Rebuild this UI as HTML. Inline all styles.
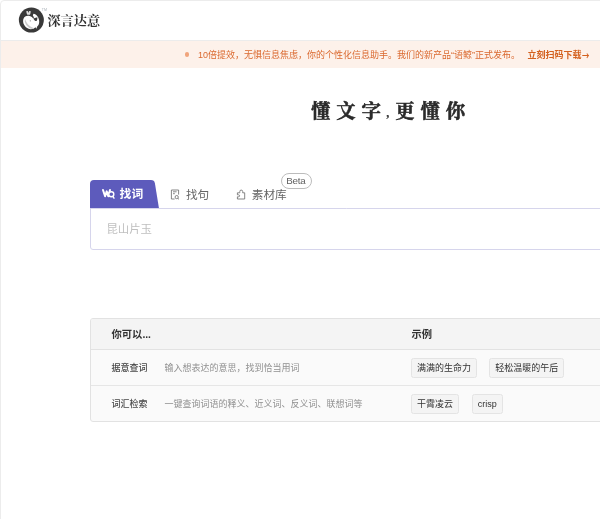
<!DOCTYPE html>
<html lang="zh-CN">
<head>
<meta charset="utf-8">
<title>深言达意</title>
<style>
*{box-sizing:border-box;margin:0;padding:0}
html,body{width:600px;height:519px;overflow:hidden;background:#fff}
body{font-family:"Liberation Sans","Noto Sans CJK SC",sans-serif;color:#333;position:relative}
body>div{will-change:transform}
.frame{position:absolute;left:0;top:0;width:640px;height:560px;border:1px solid #ececec;border-radius:4px 0 0 0;pointer-events:none;z-index:10}
.header{position:absolute;left:0;top:0;width:600px;height:41px;background:#fff;border-bottom:1px solid #ececec}
.logo{position:absolute;left:0;top:0}
.tm{position:absolute;left:41.8px;top:8.3px;font-size:3.6px;line-height:4px;color:#a9b0b8;letter-spacing:0}
.brand{position:absolute;left:47.4px;top:10.8px;font-family:"Liberation Serif","Noto Serif CJK SC",serif;font-size:13.2px;line-height:20px;color:#333;font-weight:700;transform:scaleY(0.95);white-space:nowrap}
.banner{position:absolute;left:0;top:41px;width:600px;height:27px;background:#fdf1ea;color:#da682e;font-size:9px;line-height:28.4px;white-space:nowrap}
.banner .dot{position:absolute;left:184.8px;top:11.2px;width:4.4px;height:4.4px;border-radius:50%;background:#f0a47c}
.banner .msg{position:absolute;left:198px;top:0}
.banner .cta{position:absolute;left:527.5px;top:0;font-weight:700;color:#d4611f}
.banner .arr{font-family:"Noto Sans CJK SC",sans-serif;font-weight:700;font-size:10px;line-height:10px;display:inline-block;width:10px;transform:scaleX(0.74);transform-origin:0 50%;margin-left:0.7px;position:relative;top:2.1px}
.slogan{position:absolute;left:311px;top:96.9px;font-family:"Liberation Serif","Noto Serif CJK SC",serif;font-weight:700;font-size:19.4px;line-height:30px;letter-spacing:5.9px;color:#2a2a2a;-webkit-text-stroke:0.55px #2a2a2a;white-space:nowrap}
.slogan i{font-style:normal;font-size:12px;letter-spacing:5.9px;margin-left:-0.6px;-webkit-text-stroke:0.15px #2a2a2a;font-weight:700;position:relative;top:-0.6px}
.tabs{position:absolute;left:0;top:0;width:600px;height:0}
.tab-active{position:absolute;left:90px;top:180px;width:70px;height:29px}
.tab-active span{position:absolute;left:29.6px;top:0;color:#fff;font-weight:700;font-size:11.8px;line-height:29.6px;white-space:nowrap}
.tab{position:absolute;top:180px;font-size:11.65px;line-height:30.6px;color:#666;white-space:nowrap}
.ico{position:absolute;left:0;top:0}
.beta{position:absolute;left:280.5px;top:173.1px;width:31px;height:15.8px;border:1px solid #bcbcbc;border-radius:8px;background:#fff;font-size:9.8px;letter-spacing:-0.3px;line-height:13.4px;text-align:center;color:#626262;text-indent:-0.3px}
.search{position:absolute;left:90px;top:208px;width:520px;height:41.5px;border:1px solid #d6d5ec;border-radius:0 0 0 3px;background:#fff}
.search span{position:absolute;left:15.4px;top:0;line-height:41.2px;font-size:11.4px;color:#bfbfbf;white-space:nowrap}
.card{position:absolute;left:90px;top:318px;width:520px;height:104px;border:1px solid #e2e2e2;border-radius:3px 0 0 3px;background:#fafafa;overflow:hidden}
.card .head{position:absolute;left:0;top:0;width:100%;height:31px;background:#f4f4f4;border-bottom:1px solid #e2e2e2;font-weight:700;font-size:10.3px;line-height:31px;color:#333}
.card .row{position:absolute;left:0;width:100%;height:36px;font-size:9px;line-height:36.4px}
.card .row.r1{top:31px;border-bottom:1px solid #e6e6e6}
.card .row.r2{top:67px;line-height:36.5px}
.c1{position:absolute;left:20.5px;top:0;white-space:nowrap}
.c2{position:absolute;left:320.5px;top:0;white-space:nowrap}
.row .name{position:absolute;left:20.5px;top:0;color:#484848;font-weight:500;white-space:nowrap}
.row .desc{position:absolute;left:73.5px;top:0;color:#909090;font-size:9px;white-space:nowrap}
.tag{position:absolute;top:8px;height:20px;border:1px solid #e4e4e4;background:#f4f4f4;border-radius:2.5px;padding:0 5px;font-size:9px;line-height:18px;color:#333;white-space:nowrap}
</style>
</head>
<body>
<div class="header">
  <svg class="logo" width="60" height="41" viewBox="0 0 60 41">
    <circle cx="31.35" cy="20.1" r="12.5" fill="#393939"/>
    <path d="M23.1 21.5 C23 19.2 23.9 17.4 25.2 16.5 C26.5 15.6 28.2 15.5 29.7 15.9 C31.4 16.3 32.7 17.4 33.4 18.8 L33.5 17.7 L32.9 16.1 C32.9 15.2 33 14.3 33.5 13.8 C35 13.9 36.4 14.9 37.4 16.2 C38.7 17.9 39.4 20.2 39.2 22.3 C39 24.4 38.2 25.8 37.2 26.6 L36.4 28.7 L35.5 27.2 C33.8 29 31 29.6 28.6 28.8 C26.6 28.1 25 26.6 24.1 24.8 C23.5 23.7 23.1 22.6 23.1 21.5 Z" fill="#fdfdfd"/>
    <path d="M25.2 19.2 C26.3 23 29.5 26.8 34.2 28.2 L32.6 29.1 C28.5 28.6 25.5 25 24.7 21 Z" fill="#c9c9c9"/>
    <path d="M33.3 18.4 L37.3 17.3 C37.5 18.8 37.2 20.1 36.5 21 C35.2 21 34 20 33.3 18.4 Z" fill="#393939"/>
    <path d="M32.7 16.2 L34.4 17 L33.2 18 Z" fill="#393939"/>
    <path d="M26.2 11.2 L27.8 11 L28.3 13 L29.1 11 L30.8 11.2 L30.4 13.6 L30 14.7 L27.3 14.7 L26.7 13.6 Z" fill="#dedede"/>
    <circle cx="30.3" cy="20.8" r="0.6" fill="#808080"/>
  </svg>
  <div class="tm">TM</div>
  <div class="brand">深言达意</div>
</div>
<div class="banner">
  <i class="dot"></i>
  <span class="msg">10倍提效，无惧信息焦虑，你的个性化信息助手。我们的新产品“语鲸”正式发布。</span>
  <span class="cta">立刻扫码下载<b class="arr">→</b></span>
</div>
<div class="slogan">懂文字<i>,</i>更懂你</div>
<div class="tabs">
  <svg class="ico" width="600" height="519" viewBox="0 0 600 519">
    <path d="M90 208.5 V184 Q90 180 94 180 H151 Q154.3 180 154.9 183.2 L159 208.5 Z" fill="#5d5bbc"/>
    <path d="M103 190 L105.1 196.2 L106.7 191.4 L108.3 196.2 L110 190" fill="none" stroke="#fff" stroke-width="2" stroke-linejoin="round" stroke-linecap="round"/>
    <circle cx="111.3" cy="194.3" r="2.5" fill="#5d5bbc" stroke="#fff" stroke-width="1.4"/>
    <path d="M113 196.6 L114 198.2" stroke="#fff" stroke-width="1.4" stroke-linecap="round"/>
    <g fill="none" stroke="#707070" stroke-width="0.85" transform="translate(0,0.4)">
      <path d="M174.6 198.6 H171.4 V189.6 H178.6 V194.2"/>
      <path d="M173 191.4 H176.6 M173 193.3 H174.8"/>
      <circle cx="176.7" cy="196.7" r="1.6"/>
      <path d="M177.9 197.9 L179 199"/>
      <path d="M237.4 192.4 H239.8 V191.1 Q239.8 189.7 241.2 189.7 Q242.7 189.7 242.7 191.1 V192.4 H244.7 V198.6 H237.4 V196.4 H238.5 Q239.6 196.4 239.6 195.4 Q239.6 194.4 238.5 194.4 H237.4 Z" stroke-linejoin="round"/>
    </g>
  </svg>
  <div class="tab-active"><span>找词</span></div>
  <div class="tab" style="left:185.9px">找句</div>
  <div class="tab" style="left:251.8px">素材库</div>
  <div class="beta">Beta</div>
</div>
<div class="search"><span>昆山片玉</span></div>
<div class="card">
  <div class="head"><span class="c1">你可以...</span><span class="c2">示例</span></div>
  <div class="row r1"><span class="name">据意查词</span><span class="desc">输入想表达的意思，找到恰当用词</span><span class="tag" style="left:320px">满满的生命力</span><span class="tag" style="left:398.3px">轻松温暖的午后</span></div>
  <div class="row r2"><span class="name">词汇检索</span><span class="desc">一键查询词语的释义、近义词、反义词、联想词等</span><span class="tag" style="left:320px">干霄凌云</span><span class="tag" style="left:380.7px">crisp</span></div>
</div>
<div class="frame"></div>
</body>
</html>
